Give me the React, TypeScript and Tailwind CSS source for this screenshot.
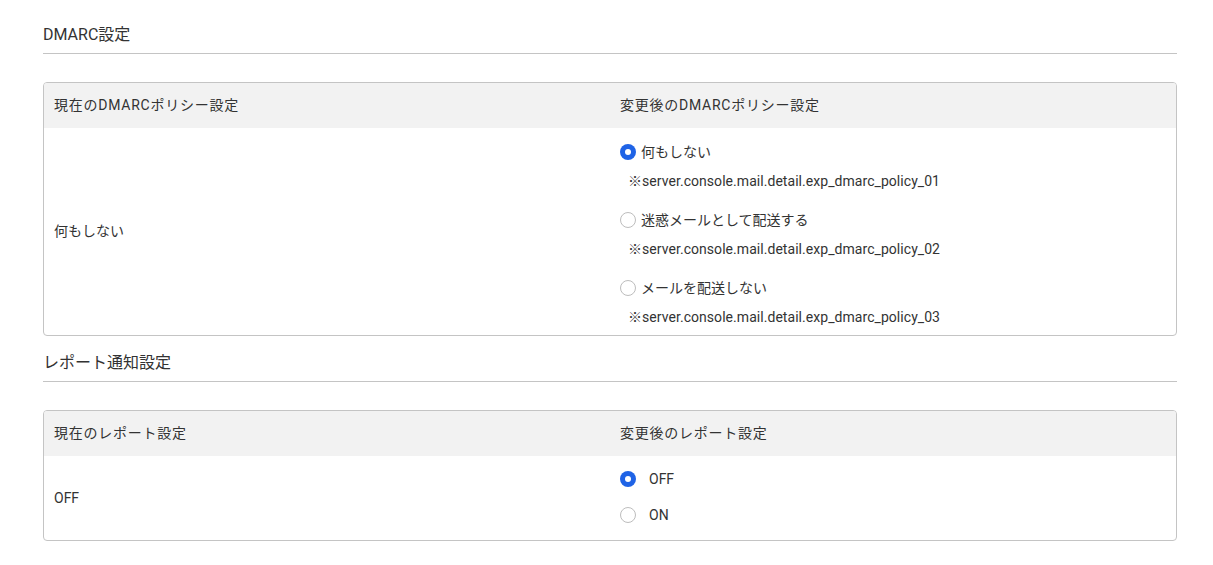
import React from "react";

const font = { fontFamily: "Roboto, 'Noto Sans CJK JP', sans-serif" };

function Radio({ checked }: { checked: boolean }) {
  return checked ? (
    <span className="flex h-[16px] w-[16px] shrink-0 items-center justify-center rounded-full bg-[#1f63e6]">
      <span className="h-[6px] w-[6px] rounded-full bg-white" />
    </span>
  ) : (
    <span className="h-[16px] w-[16px] shrink-0 rounded-full border border-[#bdbdbd] bg-white" />
  );
}

function Title({ children }: { children: React.ReactNode }) {
  return (
    <div className="border-b border-[#c4c4c4] pb-[6px] text-[16px] leading-[24px] text-[#333]">
      {children}
    </div>
  );
}

export default function App() {
  const dmarc = [
    { label: "何もしない", note: "※server.console.mail.detail.exp_dmarc_policy_01", checked: true },
    { label: "迷惑メールとして配送する", note: "※server.console.mail.detail.exp_dmarc_policy_02", checked: false },
    { label: "メールを配送しない", note: "※server.console.mail.detail.exp_dmarc_policy_03", checked: false },
  ];
  return (
    <div className="min-h-[565px] bg-white pl-[43px] pr-[36px] pt-[23px] text-[#333]" style={font}>
      <Title>DMARC設定</Title>
      <div className="mt-[28px] overflow-hidden rounded-[4px] border border-[#c4c4c4] text-[14px]">
        <div className="grid grid-cols-2 bg-[#f2f2f2] tracking-[0.75px]">
          <div className="flex h-[45px] items-center px-[10px]">現在のDMARCポリシー設定</div>
          <div className="flex h-[45px] items-center px-[10px]">変更後のDMARCポリシー設定</div>
        </div>
        <div className="grid grid-cols-2">
          <div className="flex items-center px-[10px]">何もしない</div>
          <div className="flex flex-col px-[10px] pb-[6px] pt-[12px]">
            {dmarc.map((o, i) => (
              <div key={i} className={i > 0 ? "mt-[15px]" : ""}>
                <div className="flex h-[24px] items-center gap-[5px]">
                  <Radio checked={o.checked} />
                  <span>{o.label}</span>
                </div>
                <div className="mt-[5px] h-[24px] pl-[8px] leading-[24px] tracking-[0.05px]">{o.note}</div>
              </div>
            ))}
          </div>
        </div>
      </div>

      <div className="mt-[15px]">
        <Title>レポート通知設定</Title>
      </div>
      <div className="mt-[28px] overflow-hidden rounded-[4px] border border-[#c4c4c4] text-[14px]">
        <div className="grid grid-cols-2 bg-[#f2f2f2] tracking-[0.75px]">
          <div className="flex h-[45px] items-center px-[10px]">現在のレポート設定</div>
          <div className="flex h-[45px] items-center px-[10px]">変更後のレポート設定</div>
        </div>
        <div className="grid grid-cols-2">
          <div className="flex items-center px-[10px]">OFF</div>
          <div className="flex flex-col px-[10px] pb-[7px] pt-[5px]">
            {[
              { label: "OFF", checked: true },
              { label: "ON", checked: false },
            ].map((o, i) => (
              <div key={i} className="flex h-[36px] items-center gap-[13px]">
                <Radio checked={o.checked} />
                <span>{o.label}</span>
              </div>
            ))}
          </div>
        </div>
      </div>
    </div>
  );
}
